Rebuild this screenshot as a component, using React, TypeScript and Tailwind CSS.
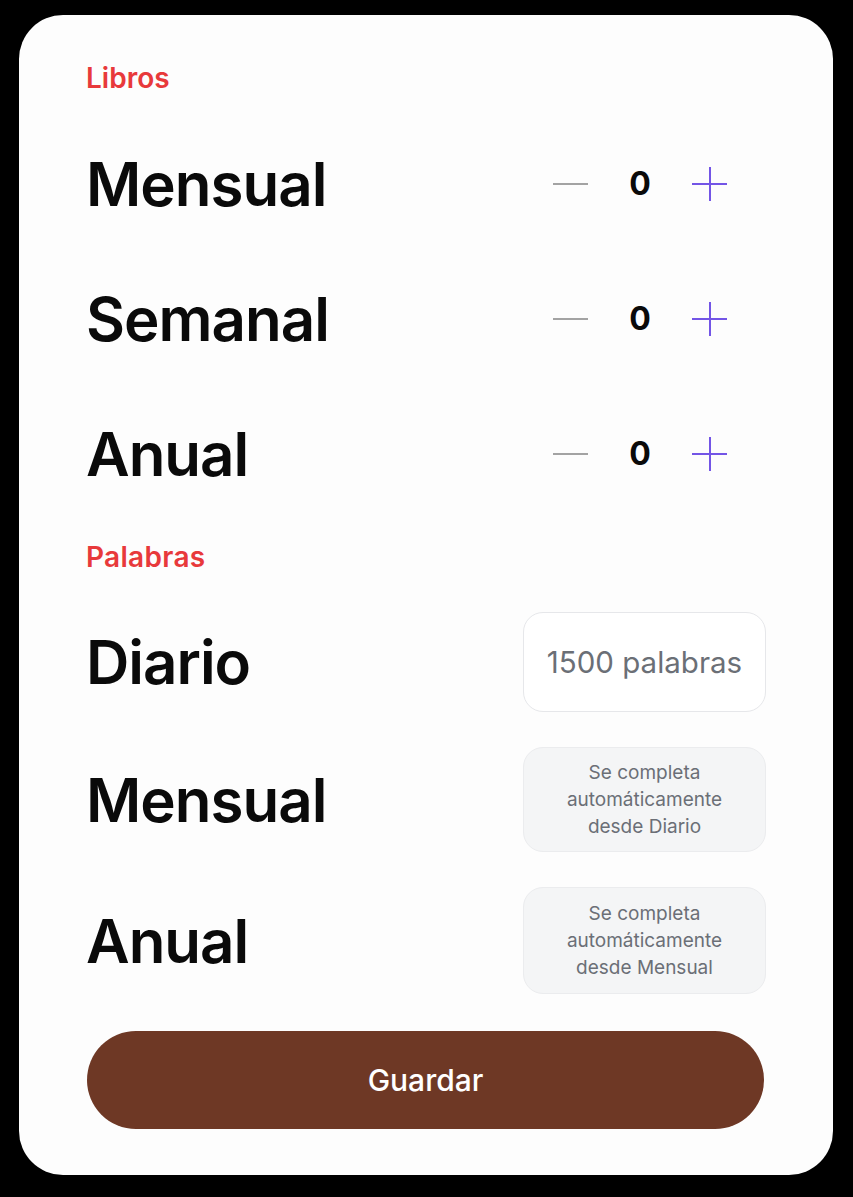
import { useState } from "react";

type Period = { label: string };

const bookGoals: Period[] = [
  { label: "Mensual" },
  { label: "Semanal" },
  { label: "Anual" },
];

function Stepper({ value, onChange }: { value: number; onChange: (v: number) => void }) {
  return (
    <div className="flex items-center mr-[39px]">
      <button
        onClick={() => onChange(Math.max(0, value - 1))}
        className="w-[35px] h-[34px] flex items-center justify-center"
      >
        <span className="block w-[35px] h-[2px] bg-[#a3a3a3]" />
      </button>
      <span className="w-[104px] text-center text-[32px] font-bold text-[#0a0a0a] leading-none">
        {value}
      </span>
      <button
        onClick={() => onChange(value + 1)}
        className="w-[35px] h-[34px] relative"
      >
        <span className="absolute left-0 top-1/2 -translate-y-1/2 w-[35px] h-[2px] bg-[#7355e6]" />
        <span className="absolute top-0 left-1/2 -translate-x-1/2 w-[2px] h-[34px] bg-[#7355e6]" />
      </button>
    </div>
  );
}

function App() {
  const [books, setBooks] = useState([0, 0, 0]);
  const [daily, setDaily] = useState("");

  return (
    <div
      className="min-h-screen bg-black pt-[15px] pl-[19px]"
      style={{ fontFamily: "Inter, 'Noto Sans', sans-serif" }}
    >
      <div className="w-[814px] h-[1160px] rounded-[44px] bg-[#fdfdfd] px-[67px] pt-[46px]">
        {/* Libros */}
        <h2 className="text-[28px] leading-[34px] font-semibold text-[#e8393b]">Libros</h2>
        <div className="mt-[21px]">
          {bookGoals.map((g, i) => (
            <div key={g.label} className="h-[135px] flex items-center justify-between">
              <span className="text-[60px] font-semibold text-[#0a0a0a] tracking-[-1px]">
                {g.label}
              </span>
              <Stepper
                value={books[i]}
                onChange={(v) => setBooks((prev) => prev.map((b, j) => (j === i ? v : b)))}
              />
            </div>
          ))}
        </div>

        {/* Palabras */}
        <h2 className="mt-[19px] text-[28px] leading-[34px] font-semibold text-[#e8393b] tracking-[0.3px]">
          Palabras
        </h2>
        <div className="mt-[38px] flex flex-col gap-[35px]">
          <div className="flex items-center justify-between">
            <span className="text-[60px] font-semibold text-[#0a0a0a] tracking-[-1px]">Diario</span>
            <input
              value={daily}
              onChange={(e) => setDaily(e.target.value)}
              placeholder="1500 palabras"
              className="w-[243px] h-[100px] rounded-[20px] border border-[#e6e7ea] bg-white text-center text-[29.5px] text-[#6b6f76] placeholder:text-[#6b6f76] outline-none"
            />
          </div>
          <div className="flex items-center justify-between">
            <span className="text-[60px] font-semibold text-[#0a0a0a] tracking-[-1px]">Mensual</span>
            <div className="w-[243px] py-[11px] rounded-[20px] border border-[#ebecee] bg-[#f4f5f6] text-center text-[19px] leading-[27px] text-[#6b6f76]">
              Se completa
              <br />
              automáticamente
              <br />
              desde Diario
            </div>
          </div>
          <div className="flex items-center justify-between">
            <span className="text-[60px] font-semibold text-[#0a0a0a] tracking-[-1px]">Anual</span>
            <div className="w-[243px] py-[12px] rounded-[20px] border border-[#ebecee] bg-[#f4f5f6] text-center text-[19px] leading-[27px] text-[#6b6f76]">
              Se completa
              <br />
              automáticamente
              <br />
              desde Mensual
            </div>
          </div>
        </div>

        <button className="mt-[37px] ml-px w-[677px] h-[98px] rounded-full bg-[#6e3825] text-white text-[30px] font-medium">
          Guardar
        </button>
      </div>
    </div>
  );
}

export default App;
